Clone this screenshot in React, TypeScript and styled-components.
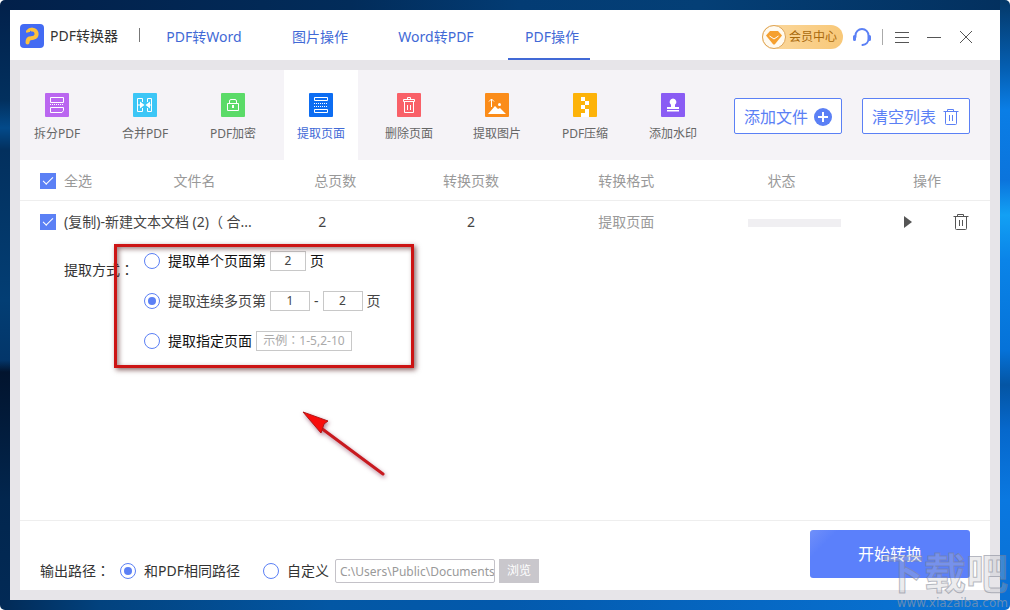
import React, { useState } from "react";
import styled, { createGlobalStyle, css } from "styled-components";

const blue = "#4169d6";
const accent = "#5b80f5";

const GlobalStyle = createGlobalStyle`
  *, *::before, *::after { box-sizing: border-box; }
  body {
    margin: 0;
    background: #fff;
    color: #333;
    font-family: "Noto Sans", "Noto Sans CJK SC", sans-serif;
    font-size: 14px;
    line-height: 20px;
  }
  button, input { font: inherit; color: inherit; margin: 0; }
  button { cursor: pointer; }
`;

const Desktop = styled.div`
  position: relative;
  display: flex;
  min-height: 100vh;
  padding: 10px;
  border-radius: 5px;
  overflow: hidden;
  background:
    linear-gradient(180deg, #043868 0, #0560b4 70px, #0a7ee6 110px, #0b74dc 180px, #12a0f4 215px, #0a84e8 260px, #0572d8 350px, #0455a4 385px, #0668cc 430px, #0a78e0 500px, #0a6fd2 100%) right / 10px 100% no-repeat,
    linear-gradient(90deg, #022a56 0, #02427e 100px, #0357a4 330px, #0359ac 500px, #0668c4 760px, #0a76d8 100%) bottom / 100% 10px no-repeat,
    linear-gradient(180deg, #02204a 0, #02305e 100px, #034a8a 128px, #03305e 150px, #033e74 300px, #03366a 360px, #02142e 372px, #02264e 500px, #022a56 100%) left / 10px 100% no-repeat,
    linear-gradient(90deg, #02204a 0, #022c5a 350px, #033c74 520px, #043f76 700px, #03305e 100%);
`;

const Window = styled.div`
  flex: 1;
  min-width: 0;
  display: flex;
  flex-direction: column;
  background: #e7e5e9;
`;

const TitleBar = styled.header`
  display: flex;
  align-items: center;
  height: 50px;
  padding: 0 27px 0 10px;
  background: #fff;
`;

const Brand = styled.div`
  display: flex;
  align-items: center;
  gap: 6px;
  width: 119px;
  padding-top: 2px;
`;

const Separator = styled.span<{ $tall?: boolean }>`
  width: 1px;
  height: ${(p) => (p.$tall ? 16 : 14)}px;
  background: ${(p) => (p.$tall ? "#aaa" : "#777")};
`;

const Tabs = styled.nav`
  display: flex;
  align-self: stretch;
  gap: 34px;
  margin-left: 20px;
`;

const Tab = styled.a<{ $active?: boolean }>`
  display: flex;
  align-items: center;
  justify-content: center;
  width: 82px;
  padding: 6px 0 0 6px;
  border-bottom: 2px solid ${(p) => (p.$active ? blue : "transparent")};
  color: ${blue};
  text-decoration: none;
  white-space: nowrap;
`;

const WindowTools = styled.div`
  display: flex;
  align-items: center;
  margin-left: auto;
  padding-top: 4px;
`;

const MemberButton = styled.button`
  display: flex;
  align-items: center;
  gap: 3px;
  width: 81px;
  height: 24px;
  padding: 0;
  border: 0;
  border-radius: 12px;
  background: linear-gradient(90deg, #fbd9a0, #f8c878);
  color: #a8690c;
  font-size: 12px;
  white-space: nowrap;
`;

const IconButton = styled.button<{ $gap?: number }>`
  display: flex;
  padding: 0;
  margin-left: ${(p) => p.$gap ?? 0}px;
  border: 0;
  background: none;
  color: #555;
`;

const Panel = styled.main`
  flex: 1;
  display: flex;
  flex-direction: column;
  margin: 10px;
  background: #fff;
`;

const Toolbar = styled.div`
  display: flex;
  align-items: center;
  justify-content: space-between;
  height: 90px;
  padding-right: 20px;
  background: #f5f3f7;
`;

const ToolList = styled.div`
  display: flex;
  align-self: stretch;
  gap: 14px;
`;

const Tool = styled.button<{ $active?: boolean }>`
  display: flex;
  flex-direction: column;
  align-items: center;
  gap: 7px;
  width: 74px;
  padding: 23px 0 0;
  border: 0;
  background: ${(p) => (p.$active ? "#fff" : "transparent")};
  color: ${(p) => (p.$active ? blue : "#666")};
  font-size: 12px;
  white-space: nowrap;
`;

const ListActions = styled.div`
  display: flex;
  gap: 20px;
  padding-top: 2px;
`;

const OutlineButton = styled.button`
  display: flex;
  align-items: center;
  justify-content: center;
  gap: 6px;
  width: 108px;
  height: 36px;
  padding: 2px 0 0;
  border: 1px solid ${accent};
  border-radius: 2px;
  background: #fff;
  color: ${accent};
  font-size: 16px;
  white-space: nowrap;
`;

const FileTable = styled.table`
  width: 100%;
  border-collapse: collapse;
  table-layout: fixed;
`;

const HeadCell = styled.th`
  height: 40px;
  padding: 2px 0 0;
  border-bottom: 1px solid #eee;
  color: #999;
  font-weight: normal;
  text-align: center;
`;

const Cell = styled.td<{ $muted?: boolean; $padRight?: number; $padLeft?: number }>`
  height: 43px;
  padding: 0 ${(p) => p.$padRight ?? 0}px 0 ${(p) => p.$padLeft ?? 0}px;
  color: ${(p) => (p.$muted ? "#999" : "#444")};
  text-align: center;
`;

const CheckLabel = styled.label`
  display: flex;
  align-items: center;
  gap: 8px;
  padding-left: 20px;
  white-space: nowrap;
`;

const CheckBox = styled.input.attrs({ type: "checkbox" })`
  appearance: none;
  width: 16px;
  height: 16px;
  flex: none;
  border: 1px solid ${accent};
  background: #fff;
  &:checked {
    background: ${accent};
  }
  &:checked::after {
    content: "";
    display: block;
    width: 10px;
    height: 5px;
    margin: 3px 2px;
    border: solid #fff;
    border-width: 0 0 1px 1px;
    transform: rotate(-45deg);
  }
`;

const Progress = styled.div`
  width: 93px;
  height: 8px;
  margin: 2px auto 0;
  background: #f0eff2;
`;

const RowActions = styled.div`
  display: flex;
  align-items: center;
  justify-content: flex-end;
  gap: 40px;
`;

const ExtractSection = styled.section`
  display: flex;
  align-items: flex-start;
  flex: 1;
  padding-left: 44px;
`;

const ExtractTitle = styled.div`
  width: 80px;
  padding-top: 17px;
  white-space: nowrap;
`;

/* The Traditional Chinese face centres the full-width colon in its box. */
const Colon = styled.span`
  font-family: "Noto Sans CJK TC", sans-serif;
  line-height: 1;
`;

const Options = styled.div`
  position: relative;
  display: flex;
  flex-direction: column;
  gap: 20px;
  padding-top: 8px;
`;

const Option = styled.div<{ $dark?: boolean }>`
  display: flex;
  align-items: center;
  gap: 4px;
  height: 20px;
  color: ${(p) => (p.$dark ? "#111" : "#444")};
  white-space: nowrap;
`;

const RadioLabel = styled.label`
  display: flex;
  align-items: center;
  gap: 8px;
  white-space: nowrap;
`;

const Radio = styled.input.attrs({ type: "radio" })`
  appearance: none;
  display: grid;
  place-items: center;
  flex: none;
  width: 16px;
  height: 16px;
  border: 1px solid ${accent};
  border-radius: 50%;
  background: #fff;
  &:checked::after {
    content: "";
    width: 8px;
    height: 8px;
    border-radius: 50%;
    background: ${accent};
  }
`;

const PageInput = styled.input<{ $width: number }>`
  width: ${(p) => p.$width}px;
  height: 20px;
  padding: 0;
  border: 1px solid #c8c8c8;
  background: #fff;
  color: #444;
  font-family: "Noto Sans", "Noto Sans CJK TC", sans-serif;
  font-size: 12px;
  text-align: center;
  &::placeholder {
    color: #aaa;
    opacity: 1;
  }
`;

const Highlight = styled.div`
  position: absolute;
  top: 1px;
  left: -30px;
  width: 300px;
  height: 124px;
  border: 3px solid #cc1414;
  box-shadow: 2px 2px 5px rgba(60, 0, 0, 0.6), inset 2px 2px 5px rgba(60, 0, 0, 0.5);
  pointer-events: none;
`;

const Arrow = styled.svg`
  position: absolute;
  top: 165px;
  left: 155px;
  filter: drop-shadow(1px 2px 2px rgba(100, 0, 40, 0.5));
  pointer-events: none;
`;

const Footer = styled.footer`
  display: flex;
  align-items: flex-start;
  height: 70px;
  padding: 9px 20px 0;
  border-top: 1px solid #eee;
`;

const OutputRow = styled.div`
  display: flex;
  align-items: center;
  height: 24px;
  margin-top: 29px;
`;

const OutputTitle = styled.span`
  width: 80px;
  white-space: nowrap;
`;

const CustomPath = styled.div`
  display: flex;
  align-items: center;
  gap: 4px;
  margin-left: 23px;
`;

const PathInput = styled.input`
  width: 160px;
  height: 24px;
  margin-left: 2px;
  padding: 0 0 0 4px;
  border: 1px solid #c4c2c8;
  border-radius: 2px;
  background: #fff;
  color: #999;
  font-size: 12px;
`;

const BrowseButton = styled.button`
  width: 40px;
  height: 24px;
  padding: 0;
  border: 0;
  background: #c9c7cc;
  color: #fff;
  font-size: 12px;
`;

const StartButton = styled.button`
  width: 160px;
  height: 48px;
  margin-left: auto;
  border: 0;
  border-radius: 3px;
  background: linear-gradient(135deg, #7090fa 0, #5b80fb 20px);
  color: #fff;
  font-size: 16px;
`;

const Watermark = styled.div`
  position: absolute;
  right: 2px;
  bottom: 0;
  display: flex;
  flex-direction: column;
  align-items: flex-end;
  pointer-events: none;
`;

const outline = css`
  color: rgba(190, 190, 198, 0.3);
  -webkit-text-stroke: 1px rgba(120, 125, 140, 0.5);
`;

const WatermarkName = styled.span`
  ${outline}
  font-size: 42px;
  font-weight: bold;
  line-height: 46px;
`;

const WatermarkSite = styled.span`
  color: rgba(130, 150, 175, 0.75);
  font-family: "DejaVu Sans", "Noto Sans", sans-serif;
  font-size: 12px;
  line-height: 14px;
`;

const TrashIcon = () => (
  <svg width="18" height="18" viewBox="0 0 18 18" fill="none" stroke="currentColor" aria-hidden="true">
    <path d="M1.5 3.5h15M5.5 3V1.5h6V3M3.5 4v11.5a1 1 0 0 0 1 1h9a1 1 0 0 0 1-1V4M7.5 7v6M10.5 7v6" />
  </svg>
);

const glyphs: Record<string, React.ReactNode> = {
  split: (
    <g fill="none" stroke="#fff">
      <path d="M5.5 9.500V4.500h13V9.500ZM5.500 19V14.500h13V17.500L17 19.500H5.500Z" />
      <path d="M5 11.500h14" strokeDasharray="1 1" />
    </g>
  ),
  merge: (
    <g fill="none" stroke="#fff">
      <path d="M9.500 9V5.500H4.500V18.500H9.500V15M14.500 9V5.500H18.500V18.500H14.500V15M4 12h5M15 12h4" />
      <path d="M7 8.500 11.500 12 7 15.500ZM17 8.500 12.500 12 17 15.500Z" fill="#fff" stroke="none" />
    </g>
  ),
  lock: (
    <g fill="none" stroke="#fff">
      <path d="M6.500 10.500h11v7h-11zM8.500 10V8a1.500 1.500 0 0 1 1.500-1.500h4A1.500 1.500 0 0 1 15.500 8v2" />
      <path d="M12 12v3" strokeWidth="2" />
    </g>
  ),
  extract: (
    <g fill="none" stroke="#fff">
      <path d="M5.500 4.500h13v3h-13zM5.500 16.500h13v3h-13z" />
      <path d="M5 10.500h14M5 13.500h14" strokeDasharray="1 1" />
    </g>
  ),
  remove: (
    <path
      fill="none"
      stroke="#fff"
      d="M6.500 6.500h11v2h-11zM10.500 6V4.500h3V6M7.500 9v10.500h9V9M10.500 12v5M13.500 12v5"
    />
  ),
  image: (
    <g fill="#fff">
      <path d="M3 21 10 13l3 3 2-1 6 6Z" />
      <circle cx="14.500" cy="11.500" r="1.500" />
      <path d="M6.500 14V6M4 8.500 6.500 6 9 8.500" fill="none" stroke="#fff" />
    </g>
  ),
  zip: <path fill="#fff" d="M8 4h4v4H8zM12 8h4v4h-4zM8 12h4v4H8zM12 16h4v8H8v-4h4z" />,
  stamp: (
    <path
      fill="#fff"
      d="M12 5.500a3.500 3.500 0 0 1 2 6.300V14h4v2H6v-2h4v-2.200a3.500 3.500 0 0 1 2-6.300ZM6 17h12v1.500H6z"
    />
  ),
};

const tools = [
  { id: "split", name: "拆分PDF", color: "#ba66f0" },
  { id: "merge", name: "合并PDF", color: "#3cc6f6" },
  { id: "lock", name: "PDF加密", color: "#5bdb68" },
  { id: "extract", name: "提取页面", color: "#0d6df2" },
  { id: "remove", name: "删除页面", color: "#f96068" },
  { id: "image", name: "提取图片", color: "#fb8c1a" },
  { id: "zip", name: "PDF压缩", color: "#fdb309" },
  { id: "stamp", name: "添加水印", color: "#8a5cf4" },
];

const tabs = ["PDF转Word", "图片操作", "Word转PDF", "PDF操作"];
const columns = ["文件名", "总页数", "转换页数", "转换格式", "状态", "操作"];
const columnWidths = [9, 18, 11, 17, 15, 17, 13];

export default function App() {
  const [tab, setTab] = useState("PDF操作");
  const [tool, setTool] = useState("extract");
  const [mode, setMode] = useState("range");
  const [output, setOutput] = useState("same");

  return (
    <>
      <GlobalStyle />
      <Desktop>
        <Window>
          <TitleBar>
            <Brand>
              <svg width="24" height="24" viewBox="0 0 24 24" aria-hidden="true">
                <rect width="24" height="24" rx="4" fill="#436bf3" />
                <path
                  d="M8 7.500C10 5 15.500 4.500 16.500 9c.6 4-2.500 5.200-6 5.200C8 14.500 7.500 16 7.500 18.500"
                  fill="none"
                  stroke="#fcc13c"
                  strokeWidth="4"
                  strokeLinecap="round"
                />
                <path d="M5 11C7 8 9 7.800 10 8V6.500l3.500 3-3.500 3v-1.700c-2-.4-3.500-.3-5 .2Z" fill="#436bf3" />
              </svg>
              <span>PDF转换器</span>
            </Brand>
            <Separator />
            <Tabs>
              {tabs.map((name) => (
                <Tab key={name} href="#" $active={tab === name} onClick={() => setTab(name)}>
                  {name}
                </Tab>
              ))}
            </Tabs>
            <WindowTools>
              <MemberButton type="button">
                <svg width="24" height="24" viewBox="0 0 24 24" aria-hidden="true">
                  <circle cx="12" cy="12" r="11.500" fill="#fffaf0" stroke="#dda456" />
                  <path d="M8 6h8l4 4.500L12.700 19.500h-1.400L4 10.500Z" fill="#f5a030" />
                  <path d="m7.500 11 4.500 3 4.500-3" fill="none" stroke="#fff" />
                </svg>
                会员中心
              </MemberButton>
              <IconButton type="button" aria-label="客服" $gap={10}>
                <svg width="18" height="18" viewBox="0 0 18 18" fill="none" stroke={accent} aria-hidden="true">
                  <path d="M2.500 9V7.500a6.500 6.500 0 0 1 13 0V11c0 3-2.500 5.500-6 6" strokeWidth="2" strokeLinecap="round" />
                  <path d="M1.500 8.500v3M16.500 8.500v3" strokeWidth="3" strokeLinecap="round" />
                </svg>
              </IconButton>
              <IconButton as="span" $gap={11}>
                <Separator $tall />
              </IconButton>
              <IconButton type="button" aria-label="菜单" $gap={12}>
                <svg width="14" height="14" viewBox="0 0 14 14" stroke="currentColor" aria-hidden="true">
                  <path d="M0 2.500h14M0 7.500h14M0 12.500h14" />
                </svg>
              </IconButton>
              <IconButton type="button" aria-label="最小化" $gap={18}>
                <svg width="14" height="14" viewBox="0 0 14 14" stroke="currentColor" aria-hidden="true">
                  <path d="M0 7.500h14" />
                </svg>
              </IconButton>
              <IconButton type="button" aria-label="关闭" $gap={18}>
                <svg width="14" height="14" viewBox="0 0 14 14" stroke="currentColor" aria-hidden="true">
                  <path d="m1 1 12 12M13 1 1 13" />
                </svg>
              </IconButton>
            </WindowTools>
          </TitleBar>

          <Panel>
            <Toolbar>
              <ToolList>
                {tools.map((t) => (
                  <Tool key={t.id} type="button" $active={tool === t.id} onClick={() => setTool(t.id)}>
                    <svg width="24" height="24" viewBox="0 0 24 24" aria-hidden="true">
                      <rect width="24" height="24" rx="1" fill={t.color} />
                      {glyphs[t.id]}
                    </svg>
                    {t.name}
                  </Tool>
                ))}
              </ToolList>
              <ListActions>
                <OutlineButton type="button">
                  添加文件
                  <svg width="18" height="18" viewBox="0 0 18 18" aria-hidden="true">
                    <circle cx="9" cy="9" r="9" fill={accent} />
                    <path d="M9 4v10M4 9h10" stroke="#fff" strokeWidth="2" />
                  </svg>
                </OutlineButton>
                <OutlineButton type="button">
                  清空列表
                  <TrashIcon />
                </OutlineButton>
              </ListActions>
            </Toolbar>

            <FileTable>
              <colgroup>
                {columnWidths.map((w, i) => (
                  <col key={i} width={`${w}%`} />
                ))}
              </colgroup>
              <thead>
                <tr>
                  <HeadCell>
                    <CheckLabel>
                      <CheckBox defaultChecked />
                      全选
                    </CheckLabel>
                  </HeadCell>
                  {columns.map((name) => (
                    <HeadCell key={name}>{name}</HeadCell>
                  ))}
                </tr>
              </thead>
              <tbody>
                <tr>
                  <Cell colSpan={2}>
                    <CheckLabel>
                      <CheckBox defaultChecked />
                      (复制)-新建文本文档 (2)（ 合...
                    </CheckLabel>
                  </Cell>
                  <Cell $padRight={26}>2</Cell>
                  <Cell>2</Cell>
                  <Cell $muted>提取页面</Cell>
                  <Cell $padLeft={26}>
                    <Progress role="progressbar" aria-label="状态" aria-valuenow={0} />
                  </Cell>
                  <Cell $padRight={20}>
                    <RowActions>
                      <IconButton type="button" aria-label="开始">
                        <svg width="8" height="12" viewBox="0 0 8 12" aria-hidden="true">
                          <path d="M0 0l8 6-8 6Z" fill="currentColor" />
                        </svg>
                      </IconButton>
                      <IconButton type="button" aria-label="删除">
                        <TrashIcon />
                      </IconButton>
                    </RowActions>
                  </Cell>
                </tr>
              </tbody>
            </FileTable>

            <ExtractSection>
              <ExtractTitle id="mode-title">
                提取方式<Colon>：</Colon>
              </ExtractTitle>
              <Options role="radiogroup" aria-labelledby="mode-title">
                <Option $dark>
                  <RadioLabel>
                    <Radio name="mode" checked={mode === "single"} onChange={() => setMode("single")} />
                    提取单个页面第
                  </RadioLabel>
                  <PageInput $width={36} defaultValue="2" aria-label="页码" />
                  页
                </Option>
                <Option>
                  <RadioLabel>
                    <Radio name="mode" checked={mode === "range"} onChange={() => setMode("range")} />
                    提取连续多页第
                  </RadioLabel>
                  <PageInput $width={40} defaultValue="1" aria-label="起始页" />
                  <span>-</span>
                  <PageInput $width={40} defaultValue="2" aria-label="结束页" />
                  页
                </Option>
                <Option $dark>
                  <RadioLabel>
                    <Radio name="mode" checked={mode === "custom"} onChange={() => setMode("custom")} />
                    提取指定页面
                  </RadioLabel>
                  <PageInput $width={96} placeholder="示例：1-5,2-10" aria-label="指定页面" />
                </Option>
                <Highlight />
                <Arrow width="90" height="72" viewBox="0 0 90 72" aria-hidden="true">
                  <path d="M22 20 84 66" stroke="#c81a20" strokeWidth="3" strokeLinecap="round" />
                  <path d="M4 4 29 13 25 16 22 25Z" fill="#f80c0c" stroke="#b01818" />
                </Arrow>
              </Options>
            </ExtractSection>

            <Footer>
              <OutputRow role="radiogroup" aria-labelledby="output-title">
                <OutputTitle id="output-title">
                  输出路径<Colon>：</Colon>
                </OutputTitle>
                <RadioLabel>
                  <Radio name="output" checked={output === "same"} onChange={() => setOutput("same")} />
                  和PDF相同路径
                </RadioLabel>
                <CustomPath>
                  <RadioLabel>
                    <Radio name="output" checked={output === "custom"} onChange={() => setOutput("custom")} />
                    自定义
                  </RadioLabel>
                  <PathInput defaultValue="C:\Users\Public\Documents" aria-label="自定义路径" />
                  <BrowseButton type="button">浏览</BrowseButton>
                </CustomPath>
              </OutputRow>
              <StartButton type="button">开始转换</StartButton>
            </Footer>
          </Panel>
        </Window>
        <Watermark>
          <WatermarkName>下载吧</WatermarkName>
          <WatermarkSite>www.xiazaiba.com</WatermarkSite>
        </Watermark>
      </Desktop>
    </>
  );
}
